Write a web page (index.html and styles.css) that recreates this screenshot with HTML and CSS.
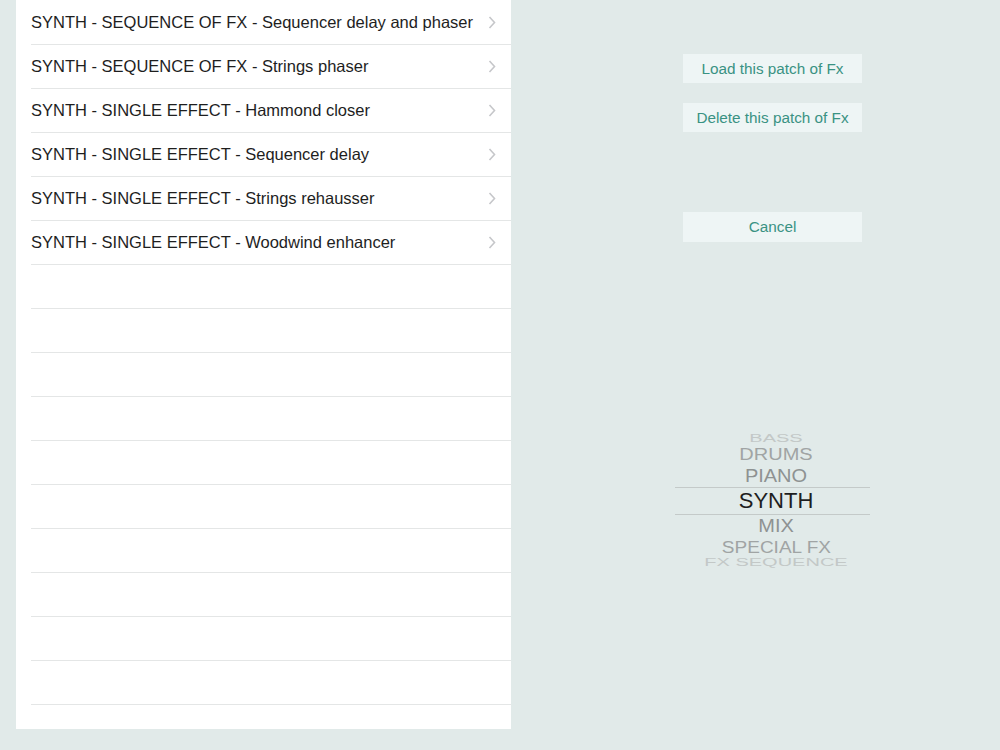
FILE: index.html
```html
<!DOCTYPE html>
<html lang="en">
<head>
    <meta charset="UTF-8">
    <meta name="viewport" content="width=device-width, initial-scale=1.0">
    <title>Fx patches</title>
    <link rel="stylesheet" href="styles.css">
</head>
<body>
    <div class="screen">
        <div class="patch-list">
            <div class="row"><span class="row-label">SYNTH - SEQUENCE OF FX - Sequencer delay and phaser</span><svg class="chevron" width="8" height="13" viewBox="0 0 8 13"><polyline points="1.5,1 6.5,6.5 1.5,12" /></svg></div>
            <div class="row"><span class="row-label">SYNTH - SEQUENCE OF FX - Strings phaser</span><svg class="chevron" width="8" height="13" viewBox="0 0 8 13"><polyline points="1.5,1 6.5,6.5 1.5,12" /></svg></div>
            <div class="row"><span class="row-label">SYNTH - SINGLE EFFECT - Hammond closer</span><svg class="chevron" width="8" height="13" viewBox="0 0 8 13"><polyline points="1.5,1 6.5,6.5 1.5,12" /></svg></div>
            <div class="row"><span class="row-label">SYNTH - SINGLE EFFECT - Sequencer delay</span><svg class="chevron" width="8" height="13" viewBox="0 0 8 13"><polyline points="1.5,1 6.5,6.5 1.5,12" /></svg></div>
            <div class="row"><span class="row-label">SYNTH - SINGLE EFFECT - Strings rehausser</span><svg class="chevron" width="8" height="13" viewBox="0 0 8 13"><polyline points="1.5,1 6.5,6.5 1.5,12" /></svg></div>
            <div class="row"><span class="row-label">SYNTH - SINGLE EFFECT - Woodwind enhancer</span><svg class="chevron" width="8" height="13" viewBox="0 0 8 13"><polyline points="1.5,1 6.5,6.5 1.5,12" /></svg></div>
            <div class="row empty"></div>
            <div class="row empty"></div>
            <div class="row empty"></div>
            <div class="row empty"></div>
            <div class="row empty"></div>
            <div class="row empty"></div>
            <div class="row empty"></div>
            <div class="row empty"></div>
            <div class="row empty"></div>
            <div class="row empty"></div>
        </div>

        <div class="side">
            <div class="actions">
                <button class="action-btn">Load this patch of Fx</button>
                <button class="action-btn">Delete this patch of Fx</button>
                <button class="action-btn cancel">Cancel</button>
            </div>

            <div class="picker">
                <div class="pick far"><span>BASS</span></div>
                <div class="pick near2"><span>DRUMS</span></div>
                <div class="pick near1"><span>PIANO</span></div>
                <div class="pick selected"><span>SYNTH</span></div>
                <div class="pick near1"><span>MIX</span></div>
                <div class="pick near2 low"><span>SPECIAL FX</span></div>
                <div class="pick far"><span>FX SEQUENCE</span></div>
            </div>
        </div>
    </div>
</body>
</html>
```

FILE: styles.css
```css
body { margin: 0; background: #e1eae9; font-family: "Liberation Sans", Arial, sans-serif; }
.screen { display: flex; width: 1000px; height: 750px; }

.patch-list { margin-left: 16px; width: 495px; height: 728px; padding-top: 1px; background: #fff; overflow: hidden; }
.row { display: flex; align-items: center; height: 43px; margin-left: 15px; border-bottom: 1px solid #e4e6e6; }
.row-label { flex: 1; font-size: 16.5px; color: #1e1e1e; }
.chevron { margin-right: 15px; fill: none; stroke: #c6c7ca; stroke-width: 1.6; }

.side { flex: 1; display: flex; flex-direction: column; }
.actions { display: flex; flex-direction: column; margin: 54px 0 0 172px; width: 179px; }
.action-btn { height: 29px; margin-bottom: 20px; border: none; background: #eef5f5; color: #3a9283; font-family: "Liberation Sans", Arial, sans-serif; font-size: 15.3px; padding: 0; }
.action-btn.cancel { margin-top: 60px; margin-bottom: 0; height: 30px; }

.picker { margin: 191px 0 0 164px; width: 195px; text-align: center; }
.pick { font-size: 20px; color: #8e9292; padding-left: 7px; }
.pick span { display: inline-block; }
.pick.far { height: 10px; line-height: 10px; color: #c3c8c7; }
.pick.far span { transform: scaleY(0.5); }
.pick.near2 { height: 22px; line-height: 22px; color: #a0a4a4; }
.pick.near2 span { transform: scaleY(0.85); }
.pick.near2.low { height: 20px; line-height: 20px; }
.pick.near2.low span { transform: scale(0.95, 0.85); }
.pick.near1 { height: 22px; line-height: 22px; color: #8e9292; }
.pick.near1 span { transform: scaleY(0.92); }
.pick.selected { font-size: 22px; color: #1e1e1e; height: 26px; line-height: 26px; border-top: 1px solid #c4cac9; border-bottom: 1px solid #c4cac9; }
```
